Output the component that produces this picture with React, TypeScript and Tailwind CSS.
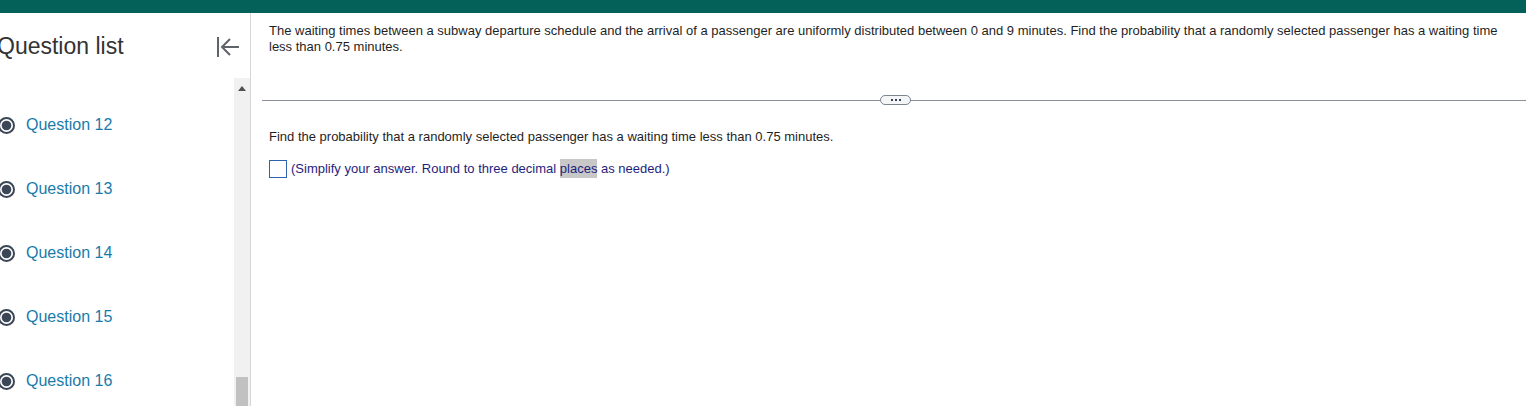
import React from 'react';

const questions = [12, 13, 14, 15, 16];

const Radio = () => (
  <svg width="17" height="17" viewBox="0 0 17 17" className="shrink-0">
    <circle cx="8.5" cy="8.5" r="7.5" fill="#ffffff" stroke="#3b4656" strokeWidth="2" />
    <circle cx="8.5" cy="8.5" r="4.8" fill="#3b4656" />
  </svg>
);

const CollapseIcon = () => (
  <svg width="24" height="22" viewBox="0 0 24 22" fill="none" stroke="#5f6468" strokeWidth="2">
    <line x1="2" y1="1" x2="2" y2="21" />
    <line x1="6" y1="11" x2="23" y2="11" />
    <polyline points="14,3 6,11 14,19" strokeLinejoin="miter" />
  </svg>
);

export default function App() {
  return (
    <div className="w-[1526px] h-[406px] overflow-hidden bg-white flex flex-col" style={{ fontFamily: '"Liberation Sans", Arial, sans-serif' }}>
      <div className="h-[13px] bg-[#04615a] shrink-0" />
      <div className="flex flex-1 min-h-0">
        {/* sidebar */}
        <aside className="w-[251px] shrink-0 border-r border-[#d6d6d6] flex flex-col">
          <div className="h-[65px] flex items-center justify-between pr-[10px] pt-[2px]">
            <h2 className="-ml-[3px] text-[23px] leading-none text-[#333333]">Question list</h2>
            <CollapseIcon />
          </div>
          <div className="flex flex-1 min-h-0">
            <ul className="flex-1 pt-[15px]">
              {questions.map((q) => (
                <li key={q} className="h-[64px] flex items-center gap-[11px] -ml-[2px]">
                  <Radio />
                  <span className="text-[16px] text-[#1a7bab]">Question {q}</span>
                </li>
              ))}
            </ul>
            <div className="w-[16px] bg-[#f1f1f1] flex flex-col items-center justify-between">
              <div className="mt-[8px] w-0 h-0 border-l-[4px] border-r-[4px] border-b-[5px] border-l-transparent border-r-transparent border-b-[#505050]" />
              <div className="w-[12px] h-[29px] bg-[#c1c1c1]" />
            </div>
          </div>
        </aside>

        {/* main content */}
        <main className="flex-1 pl-[11px] pt-[10px] text-[13px] leading-[16px] text-[#1f1f1f]">
          <p className="pl-[7px] pr-[16px]">
            The waiting times between a subway departure schedule and the arrival of a passenger are uniformly distributed between 0 and 9 minutes. Find the probability that a randomly selected passenger has a waiting time less than 0.75 minutes.
          </p>
          <div className="mt-[40px] flex items-center">
            <div className="w-[618px] h-px bg-[#8a8f99]" />
            <button className="w-[31px] h-[10px] rounded-full border border-[#7c8490] bg-[#f3f5f7] flex items-center justify-center gap-[2px]">
              <span className="w-[2px] h-[2px] bg-[#3b4656]" />
              <span className="w-[2px] h-[2px] bg-[#3b4656]" />
              <span className="w-[2px] h-[2px] bg-[#3b4656]" />
            </button>
            <div className="flex-1 h-px bg-[#8a8f99]" />
          </div>
          <p className="pl-[7px] mt-[24px]">Find the probability that a randomly selected passenger has a waiting time less than 0.75 minutes.</p>
          <div className="pl-[7px] mt-[15px] flex items-center gap-[4px]">
            <span className="w-[18px] h-[18px] border border-[#2e62ad] bg-white" />
            <span className="text-[#1e1e7c]">
              (Simplify your answer. Round to three decimal <span className="bg-[#c8c8c8] py-[2px]">places</span> as needed.)
            </span>
          </div>
        </main>
      </div>
    </div>
  );
}
